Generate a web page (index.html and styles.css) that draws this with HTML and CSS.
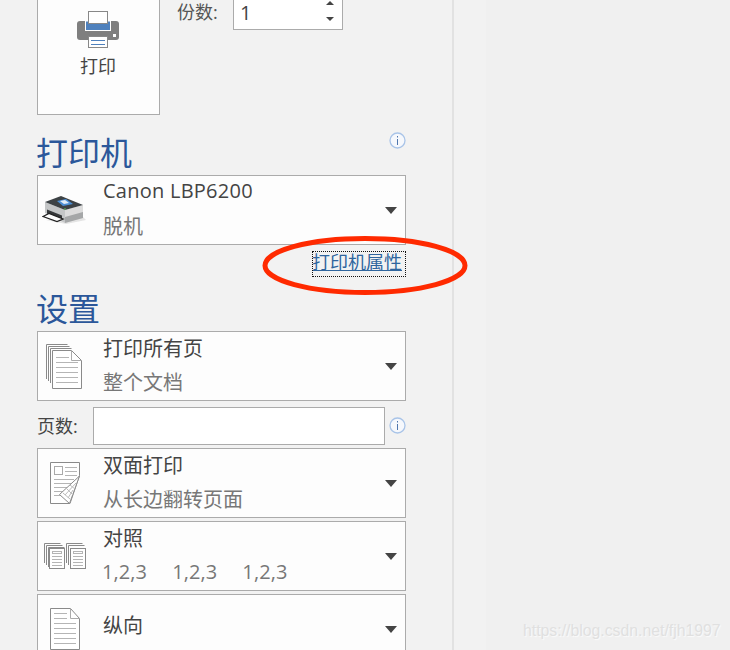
FILE: index.html
```html
<!DOCTYPE html>
<html lang="zh-CN">
<head>
<meta charset="utf-8">
<title>打印</title>
<link rel="stylesheet" href="styles.css">
</head>
<body>
<div class="app">
  <main class="panel">
    <div class="top-row">
      <button class="print-btn">
        <svg class="print-icon" width="42" height="38" viewBox="0 0 42 38">
          <rect x="0" y="10" width="42" height="19" rx="3" fill="#7f7f7f"/>
          <rect x="8.500" y="10" width="25" height="9.500" fill="#4f81bd" stroke="#fff"/>
          <rect x="11.500" y="0.500" width="19" height="12" fill="#fff" stroke="#888"/>
          <rect x="11.500" y="25.500" width="19" height="11" fill="#fff" stroke="#888"/>
          <path d="M14 29.500h14M14 33.500h14" stroke="#4f81bd"/>
          <rect x="36" y="23" width="3" height="3" fill="#fff"/>
        </svg>
        <span>打印</span>
      </button>
      <div class="copies">
        <span class="copies-label">份数:</span>
        <div class="spinner">
          <span>1</span>
          <div class="spin-arrows"><i class="tri-up"></i><i class="tri-down"></i></div>
        </div>
      </div>
    </div>

    <div class="head-row printer-head">
      <h2>打印机</h2>
      <svg class="info" width="17" height="17" viewBox="0 0 17 17"><circle cx="8.500" cy="8.500" r="7.500" fill="#f6f8fc" stroke="#a9c4e8" stroke-width="1.300"/><path d="M8.500 4v1.500M8.500 7v6" stroke="#4f76ad"/></svg>
    </div>

    <div class="drop">
      <div class="drop-icon printer-glyph">
        <svg width="44" height="30" viewBox="0 0 44 30">
          <path d="M4 25l20 4 20-4-3-3z" fill="#e4e4e4"/>
          <path d="M3 7l20 8v13L3 18z" fill="#c4c6c7"/>
          <path d="M23 15l18-5v13l-18 5z" fill="#dcdcdc"/>
          <path d="M23 22l18-5v6l-18 5z" fill="#a5a7a8"/>
          <path d="M3 7L19 1l22 9-18 5z" fill="#3d4245"/>
          <path d="M15 6l9-2 7 5-10 2z" fill="#4c8fd6"/>
          <path d="M18 6l5-1 4 3-5 1z" fill="#e3eef8"/>
          <rect x="22" y="13.500" width="2" height="1" fill="#5fc35f"/>
          <path d="M5 14.500l15 6v4l-15-6z" fill="#35383a"/>
          <path d="M1 21.500l6-3 14 5.500-6 2.500z" fill="#fff" stroke="#222" stroke-width="1.300"/>
        </svg>
      </div>
      <div class="drop-text"><div class="t1 latin">Canon LBP6200</div><div class="t2">脱机</div></div>
      <i class="tri-down caret"></i>
    </div>

    <div class="link-row"><a class="prop-link" href="#">打印机属性</a></div>

    <h2 class="settings-head">设置</h2>

    <div class="drop">
      <div class="drop-icon stack-glyph">
        <svg width="38" height="47" viewBox="0 0 38 47">
          <path d="M1.500 36V1.500h21M3.500 38V3.500h21M5.500 40V5.500h21" fill="#fff" stroke="#8a8a8a"/>
          <path d="M7.500 45.500V7.500h19l10 10v28z" fill="#fff" stroke="#8a8a8a"/>
          <path d="M26.500 7.500v10h10" fill="none" stroke="#aaa"/>
          <path d="M11 14.500h13M11 19.500h22M11 24.500h22M11 29.500h22M11 34.500h22M11 39.500h22" stroke="#b5b5b5"/>
        </svg>
      </div>
      <div class="drop-text"><div class="t1">打印所有页</div><div class="t2">整个文档</div></div>
      <i class="tri-down caret"></i>
    </div>

    <div class="pages-row">
      <span class="pages-label">页数:</span>
      <div class="pages-input"></div>
      <svg class="info" width="17" height="17" viewBox="0 0 17 17"><circle cx="8.500" cy="8.500" r="7.500" fill="#f6f8fc" stroke="#a9c4e8" stroke-width="1.300"/><path d="M8.500 4v1.500M8.500 7v6" stroke="#4f76ad"/></svg>
    </div>

    <div class="drop-stack">
      <div class="drop">
        <div class="drop-icon page-glyph">
          <svg width="32" height="42" viewBox="0 0 32 42">
            <path d="M1.500 41.500V.5h29v13l-9.500 28z" fill="#fff" stroke="#8a8a8a"/>
            <rect x="5.500" y="4.500" width="8" height="8" fill="#fff" stroke="#aaa"/>
            <path d="M16 5.500h12M16 9.500h12M16 13.500h12M5 17.500h20M5 21.500h17M5 25.500h15M5 29.500h11M5 33.500h7" stroke="#b5b5b5"/>
            <path d="M30.500 14L20.500 41.500 10.500 32.500z" fill="#fff" stroke="#8a8a8a"/>
            <path d="M27 21l-11 12M24 28l-5 8M14 31l7 6M18 27l6 6M21 23l5 4" stroke="#bbb"/>
          </svg>
        </div>
        <div class="drop-text"><div class="t1">双面打印</div><div class="t2">从长边翻转页面</div></div>
        <i class="tri-down caret"></i>
      </div>

      <div class="drop">
        <div class="drop-icon collate">
          <svg width="44" height="28" viewBox="0 0 44 28">
            <path d="M.5 21V1.500h16M2.500 23V3.500h16M4.500 25V5.500h16" fill="none" stroke="#8a8a8a"/>
            <rect x="5.500" y="6.500" width="15" height="20" fill="#fff" stroke="#8a8a8a"/>
            <rect x="8.500" y="9.500" width="9" height="2" fill="#fff" stroke="#b5b5b5"/>
            <path d="M8 14.500h10M8 17.500h10M8 20.500h10M8 23.500h10" stroke="#b5b5b5"/>
            <path d="M22.500 21V1.500h16M24.500 23V3.500h16" fill="none" stroke="#8a8a8a"/>
            <rect x="26.500" y="6.500" width="15" height="20" fill="#fff" stroke="#8a8a8a"/>
            <rect x="29.500" y="9.500" width="9" height="2" fill="#fff" stroke="#b5b5b5"/>
            <path d="M29 14.500h10M29 17.500h10M29 20.500h10M29 23.500h10" stroke="#b5b5b5"/>
          </svg>
        </div>
        <div class="drop-text"><div class="t1">对照</div><div class="t2 nums"><span>1,2,3</span><span>1,2,3</span><span>1,2,3</span></div></div>
        <i class="tri-down caret"></i>
      </div>

      <div class="drop">
        <div class="drop-icon page-glyph">
          <svg width="32" height="42" viewBox="0 0 32 42">
            <path d="M1.500 41.500V.5h20l9 10v31z" fill="#fff" stroke="#8a8a8a"/>
            <path d="M21.500.5v10h9" fill="none" stroke="#aaa"/>
            <path d="M5 5.500h13M5 10.500h13M5 15.500h22M5 20.500h22M5 25.500h22M5 30.500h22M5 35.500h22" stroke="#b5b5b5"/>
          </svg>
        </div>
        <div class="drop-text single"><div class="t1">纵向</div></div>
        <i class="tri-down caret"></i>
      </div>
    </div>
  </main>
  <div class="gutter"></div>
  <div class="backdrop"></div>
</div>

<svg class="annotation" width="210" height="66" viewBox="0 0 210 66">
  <ellipse cx="104" cy="32.500" rx="100" ry="27" fill="none" stroke="#ff2a00" stroke-width="5"/>
</svg>
<div class="watermark">https://blog.csdn.net/fjh1997</div>
</body>
</html>
```

FILE: styles.css
```css
* { box-sizing: border-box; }
html, body { margin: 0; padding: 0; height: 650px; overflow: hidden; }
body {
  font-family: "Open Sans", "Noto Sans CJK SC", sans-serif;
  color: #444;
  background: #efefef;
  position: relative;
}
.app { display: flex; height: 650px; }
.panel {
  width: 454px;
  flex: none;
  padding-left: 37px;
  padding-right: 46px;
  background: #f2f2f2;
  border-right: 2px solid #e2e2e2;
  overflow: hidden;
}
.gutter { width: 32px; flex: none; background: #f2f2f2; }
.backdrop { flex: 1; background: #f0f0f0; }

.top-row { display: flex; height: 115px; }
.print-btn {
  width: 123px;
  height: 115px;
  flex: none;
  padding: 11px 1px 0 0;
  display: flex;
  flex-direction: column;
  align-items: center;
  background: #fdfdfd;
  border: 1px solid #ababab;
  border-top: 0;
  font: 18px "Open Sans", "Noto Sans CJK SC", sans-serif;
  color: #444;
}
.print-btn span { line-height: 24px; margin-top: 5px; }
.print-icon { display: block; }
.copies { display: flex; margin-left: 17px; height: 30px; }
.copies-label { width: 56px; margin-right: 0; font-size: 18px; line-height: 25px; color: #555; }
.spinner {
  width: 110px;
  height: 30px;
  padding-left: 6px;
  display: flex;
  justify-content: space-between;
  background: #fff;
  border: 1px solid #ababab;
  border-top: 0;
  font-size: 20px;
  line-height: 26px;
}
.spin-arrows {
  width: 22px;
  padding-top: 1px;
  padding-right: 2px;
  display: flex;
  flex-direction: column;
  align-items: center;
  gap: 12px;
}
.tri-up, .tri-down { display: block; width: 0; height: 0; border-left: 4px solid transparent; border-right: 4px solid transparent; }
.tri-up { border-bottom: 4px solid #444; }
.tri-down { border-top: 4px solid #444; }

h2 { margin: 0 0 0 -1px; font-weight: 400; font-size: 32px; color: #2b579a; }
.head-row { display: flex; justify-content: space-between; }
.printer-head { height: 60px; padding-top: 17px; }
.printer-head h2 { line-height: 42px; }
.info { display: block; flex: none; }

.drop {
  position: relative;
  width: 369px;
  height: 70px;
  flex: none;
  display: flex;
  align-items: center;
  background: #fdfdfd;
  border: 1px solid #ababab;
}
.drop-icon { width: 65px; flex: none; }
.drop-icon svg { display: block; }
.printer-glyph { padding-left: 4px; }
.stack-glyph { padding-left: 7px; }
.page-glyph { padding-left: 11px; }
.collate { padding-left: 6px; }
.drop-text { flex: 1; align-self: flex-start; margin-top: -1px; }
.t1 { font-size: 20px; line-height: 35px; color: #444; }
.t2 { font-size: 20px; line-height: 33px; color: #777; }
.latin { line-height: 31px; margin-bottom: 4px; letter-spacing: 0.25px; }
.nums { display: flex; gap: 25px; line-height: 31px; margin-left: -1px; }
.nums span { letter-spacing: 0.1px; }
.drop-text.single { align-self: center; margin: 0 0 8px; }
.caret { border-left-width: 6px; border-right-width: 6px; border-top-width: 7px; margin-right: 8px; }

.link-row { display: flex; justify-content: flex-end; height: 48px; padding-top: 6px; }
.prop-link {
  display: block;
  height: 26px;
  width: 94px;
  font-size: 18px;
  line-height: 23px;
  color: #2f659e;
  text-decoration: underline;
  outline: 1px dotted #111;
  outline-offset: -1px;
}

.settings-head { line-height: 32px; height: 38px; }

.pages-row { display: flex; align-items: flex-start; height: 47px; padding-top: 6px; }
.pages-label { width: 56px; font-size: 18px; line-height: 38px; color: #444; }
.pages-input { width: 292px; height: 38px; background: #fff; border: 1px solid #ababab; }
.pages-row .info { margin: 10px 0 0 4px; }
.drop-stack { display: flex; flex-direction: column; gap: 3px; }

.annotation { position: absolute; left: 261px; top: 233px; }
.watermark {
  position: absolute;
  left: 523px;
  top: 620px;
  font: 15.800px/22px "Liberation Sans", sans-serif;
  color: #e0e0e0;
  text-shadow: 1px 1px 1px #fbfbfb;
  white-space: nowrap;
}
```
